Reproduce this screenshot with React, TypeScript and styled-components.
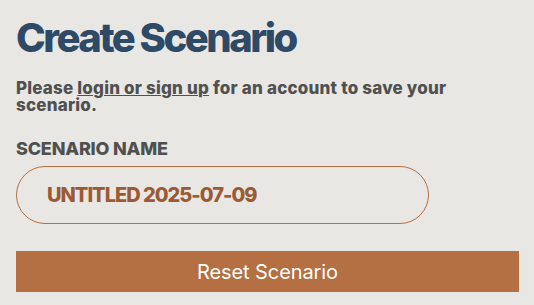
import React from 'react';
import styled, { createGlobalStyle } from 'styled-components';

const GlobalStyle = createGlobalStyle`
  html, body {
    margin: 0;
    padding: 0;
    background-color: #e8e7e3;
  }
  body {
    font-family: Inter, "Liberation Sans", sans-serif;
  }
`;

const Panel = styled.section`
  box-sizing: border-box;
  width: 534px;
  padding: 14px 15px 12px 16px;
`;

const Title = styled.h1`
  margin: 0;
  color: #2e4a66;
  font-size: 40px;
  font-weight: 800;
  line-height: 48px;
  letter-spacing: -2.5px;
`;

const Note = styled.p`
  margin: 18px 0 0;
  color: #505050;
  font-size: 17px;
  font-weight: 800;
  line-height: 17px;
  letter-spacing: 0.2px;

  a {
    color: inherit;
    text-decoration: underline;
    text-decoration-thickness: 1px;
    text-underline-offset: 1px;
  }
`;

const Field = styled.div`
  display: flex;
  flex-direction: column;
  align-items: flex-start;
  margin-top: 26px;
`;

const Label = styled.label`
  color: #505050;
  font-size: 18px;
  font-weight: 800;
  line-height: 18px;
  letter-spacing: -0.2px;
  text-transform: uppercase;
`;

const NameInput = styled.input`
  box-sizing: border-box;
  width: 413px;
  height: 58px;
  margin-top: 8px;
  padding: 0 30px;
  border: 1px solid #b46f42;
  border-radius: 29px;
  background: transparent;
  color: #9b5a33;
  font-family: Inter, "Liberation Sans", sans-serif;
  font-size: 20px;
  font-weight: 800;
  letter-spacing: -1px;
  outline: none;
`;

const ResetButton = styled.button`
  display: block;
  width: 503px;
  height: 41px;
  margin-top: 27px;
  border: none;
  background-color: #b46f42;
  color: #ffffff;
  font-family: Inter, "Liberation Sans", sans-serif;
  font-size: 20px;
  font-weight: 400;
  letter-spacing: -0.1px;
  cursor: pointer;
`;

export default function App() {
  return (
    <>
      <GlobalStyle />
      <Panel>
        <Title>Create Scenario</Title>
        <Note>
          Please <a href="#login">login or sign up</a> for an account to save your
          <br />
          scenario.
        </Note>
        <Field>
          <Label htmlFor="scenario-name">Scenario Name</Label>
          <NameInput id="scenario-name" defaultValue="UNTITLED 2025-07-09" />
        </Field>
        <ResetButton type="button">Reset Scenario</ResetButton>
      </Panel>
    </>
  );
}
